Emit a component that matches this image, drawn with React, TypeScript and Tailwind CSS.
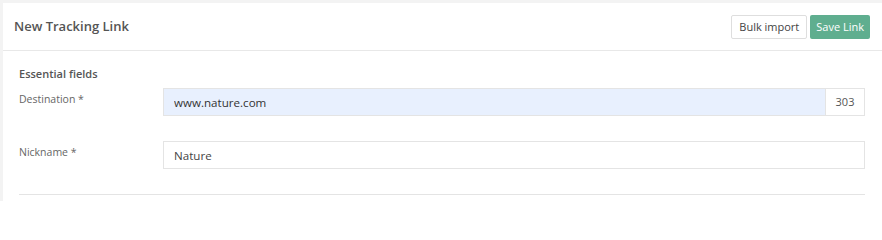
export default function App() {
  return (
    <div
      className="h-[201px] bg-[#f3f3f3] pt-[3px] pl-[3px] text-[#555]"
      style={{ fontFamily: '"Open Sans", "Noto Sans", sans-serif' }}
    >
      <div className="h-full bg-white">
        <div className="flex h-[48px] items-center justify-between border-b border-[#e8e8e8] pl-[11px] pr-[12px]">
          <h1 className="text-[13px] font-semibold text-[#555]">New Tracking Link</h1>
          <div className="flex items-center gap-[3px] pt-[1px]">
            <button className="h-[24px] rounded-[2px] border border-[#dedede] bg-white px-[7px] text-[11px] text-[#444]">
              Bulk import
            </button>
            <button className="h-[24px] rounded-[2px] bg-[#5fae8f] px-[6px] text-[11px] font-medium text-white">
              Save Link
            </button>
          </div>
        </div>

        <div className="pl-[16px] pr-[17px] pt-[15px]">
          <div className="mb-[6px] text-[11px] leading-[16px] font-semibold text-[#555]">
            Essential fields
          </div>

          <div className="flex items-center">
            <label className="w-[144px] -mt-[5px] text-[10.5px] text-[#666]">Destination *</label>
            <div className="flex h-[28px] flex-1">
              <input
                className="h-full flex-1 border border-[#e4e4e4] bg-[#e8f0fe] px-[10px] text-[11.6px] text-[#333] outline-none"
                defaultValue="www.nature.com"
              />
              <span className="flex w-[39px] items-center justify-center border border-l-0 border-[#e4e4e4] text-[11px] text-[#555]">
                303
              </span>
            </div>
          </div>

          <div className="mt-[25px] flex items-center">
            <label className="w-[144px] -mt-[5px] text-[10.5px] text-[#666]">Nickname *</label>
            <input
              className="h-[28px] flex-1 border border-[#e4e4e4] bg-white px-[10px] text-[11.6px] text-[#444] outline-none"
              defaultValue="Nature"
            />
          </div>

          <div className="mt-[25px] border-t border-[#e4e4e4]" />
        </div>
      </div>
    </div>
  );
}
